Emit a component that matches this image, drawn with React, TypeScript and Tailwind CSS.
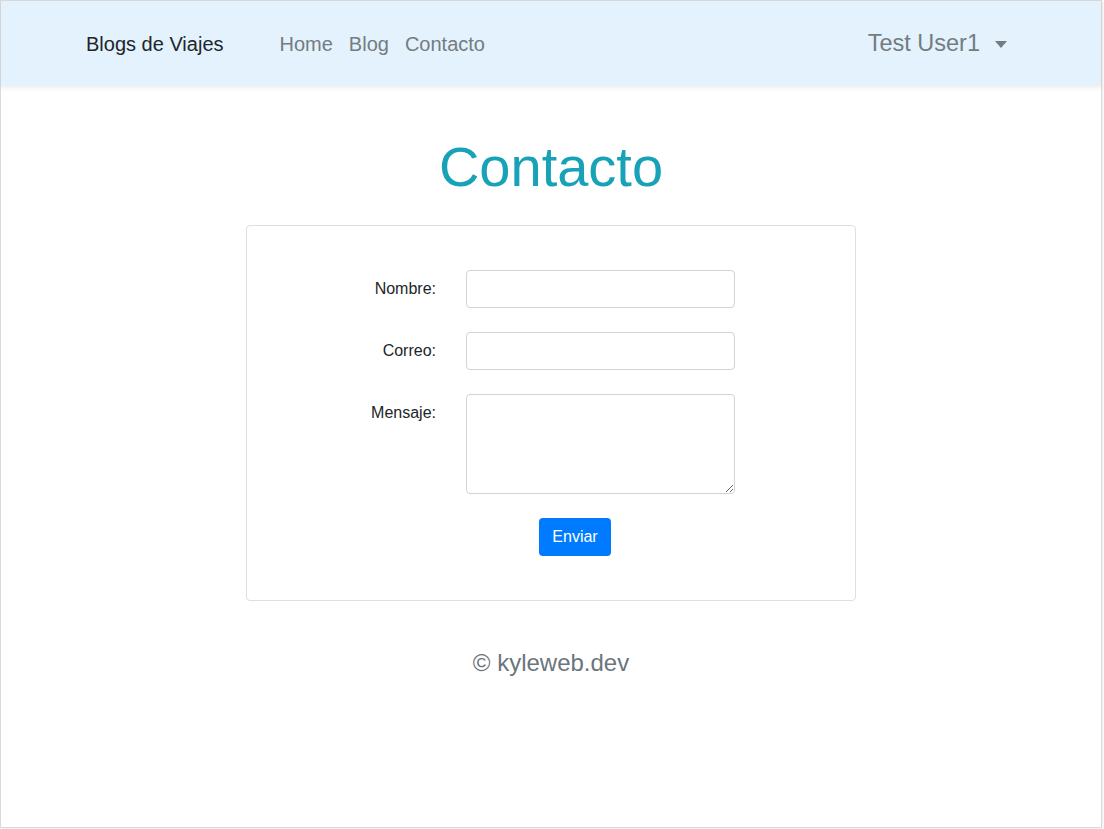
const links = ["Home", "Blog", "Contacto"];

const fields = [
  { label: "Nombre:", type: "input" },
  { label: "Correo:", type: "input" },
  { label: "Mensaje:", type: "textarea" },
];

const App = () => {
  return (
    <div className="h-[829px] w-[1104px] bg-white font-['Liberation_Sans',Arial,sans-serif]">
      <div className="flex h-[828px] w-[1102px] flex-col border border-[#dadada] shadow-[1px_1px_2px_rgba(0,0,0,0.08)]">
        {/* Barra de navegación */}
        <nav className="relative z-10 flex h-[85px] shrink-0 items-center bg-[#e3f2fd] pl-[85px] pr-[94px] shadow-[0_2px_5px_rgba(0,0,0,0.08)]">
          <a href="#" className="text-[20px] text-[#212529]">
            Blogs de Viajes
          </a>
          <ul className="ml-[56px] flex gap-4">
            {links.map((link) => (
              <li key={link}>
                <a href="#" className="text-[20px] text-[#737c80]">
                  {link}
                </a>
              </li>
            ))}
          </ul>
          <button className="ml-auto flex items-center text-[23.5px] text-[#737c80]">
            Test User1
            <span className="ml-[15px] mt-[1px] h-0 w-0 border-x-[6px] border-t-[7px] border-x-transparent border-t-[#737c80]" />
          </button>
        </nav>

        {/* Contenido */}
        <main className="flex flex-col items-center">
          <h1 className="mt-[47px] mb-[25px] text-[56px] leading-[1.2] text-[#17a2b8]">
            Contacto
          </h1>
          <div className="w-[610px] rounded border border-[#dfdfdf] py-[44px]">
            <form className="flex flex-col gap-6">
              {fields.map((field) => (
                <div
                  key={field.label}
                  className={`flex gap-[30px] ${field.type === "input" ? "items-center" : "items-start"}`}
                >
                  <label
                    className={`w-[189px] text-right text-[16px] text-[#212529] ${field.type === "textarea" ? "pt-[7px]" : ""}`}
                  >
                    {field.label}
                  </label>
                  {field.type === "input" ? (
                    <input
                      type="text"
                      className="h-[38px] w-[269px] rounded border border-[#ced4da] px-3 outline-none"
                    />
                  ) : (
                    <textarea className="h-[100px] w-[269px] rounded border border-[#ced4da] px-3 py-1.5 outline-none" />
                  )}
                </div>
              ))}
              <div className="pl-[292px]">
                <button
                  type="button"
                  className="h-[38px] w-[72px] rounded bg-[#007bff] text-[16px] text-white"
                >
                  Enviar
                </button>
              </div>
            </form>
          </div>
          <p className="mt-[44px] text-[24px] text-[#6c757d]">© kyleweb.dev</p>
        </main>
      </div>
    </div>
  );
};

export default App;
